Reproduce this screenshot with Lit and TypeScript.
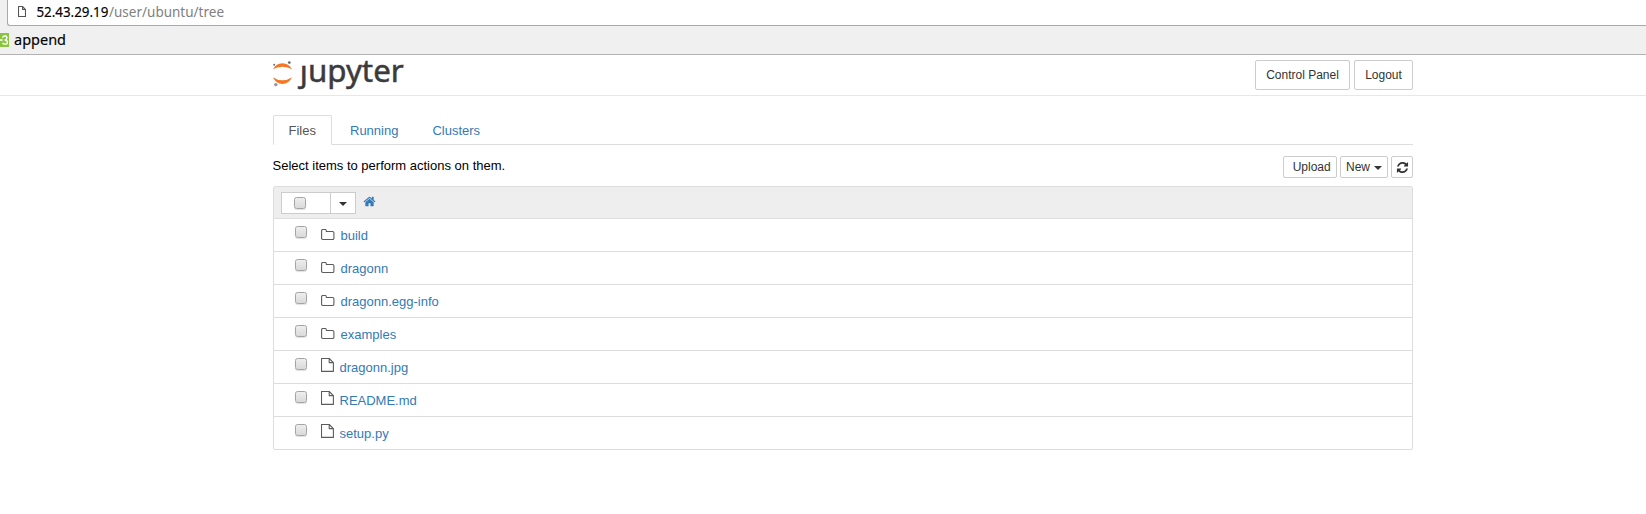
import { LitElement, html, svg, css } from "lit";
import { customElement } from "lit/decorators.js";

interface Entry {
  name: string;
  dir: boolean;
}

const ENTRIES: Entry[] = [
  { name: "build", dir: true },
  { name: "dragonn", dir: true },
  { name: "dragonn.egg-info", dir: true },
  { name: "examples", dir: true },
  { name: "dragonn.jpg", dir: false },
  { name: "README.md", dir: false },
  { name: "setup.py", dir: false },
];

const HOME =
  "M1472 992v480q0 26-19 45t-45 19h-384v-384h-256v384h-384q-26 0-45-19t-19-45v-480q0-1 .5-3t.5-3l575-474 575 474q1 2 1 6zm223-69l-62 74q-8 9-21 11h-3q-13 0-21-7l-692-577-692 577q-12 8-24 7-13-2-21-11l-62-74q-8-10-7-23.5t11-21.5l719-599q32-26 76-26t76 26l244 204v-195q0-14 9-23t23-9h192q14 0 23 9t9 23v408l219 182q10 8 11 21.5t-7 23.5z";
const REFRESH =
  "M1639 1056q0 5-1 7-64 268-268 434.5t-478 166.5q-146 0-282.5-55t-243.5-157l-129 129q-19 19-45 19t-45-19-19-45v-448q0-26 19-45t45-19h448q26 0 45 19t19 45-19 45l-137 137q71 66 161 102t187 36q134 0 250-65t186-179q11-17 53-117 8-23 30-23h192q13 0 22.5 9.5t9.5 22.5zm25-800v448q0 26-19 45t-45 19h-448q-26 0-45-19t-19-45 19-45l138-138q-148-137-349-137-134 0-250 65t-186 179q-11 17-53 117-8 23-30 23h-199q-13 0-22.5-9.5t-9.5-22.5v-7q65-268 270-434.5t480-166.5q146 0 284 55.5t245 156.5l130-129q19-19 45-19t45 19 19 45z";

const folder = svg`<path d="M.6 1.8Q.6.5 1.9.5H4.2Q5.4.5 5.4 2.5H11.6Q12.9 2.5 12.9 3.8V9.2Q12.9 10.5 11.6 10.5H1.9Q.6 10.5.6 9.2Z" fill="none" stroke="#5c5c5c" stroke-width="1.1"/>`;
const file = svg`<path d="M.5.5H8.2L12.4 4.6V13.4H.5ZM8.2.5V4.6H12.4" fill="none" stroke="#5c5c5c" stroke-width="1.1" stroke-linejoin="round"/>`;

@customElement("browser-chrome")
export class BrowserChrome extends LitElement {
  static styles = css`
    :host { display: block; }
    .chrome { box-sizing: border-box; background: #f0f0f0; border-bottom: 1px solid #b3b3b3; height: 55px; overflow: hidden; }
    .address { height: 25px; margin-left: 7px; background: #fff; border-left: 1px solid #a9a9a9; border-bottom: 1px solid #a9a9a9; border-bottom-left-radius: 3px; display: flex; }
    .page { margin: 6px 0 0 10px; width: 8px; height: 11px; }
    .url { margin-left: 9px; }
    .bookmarks { display: flex; }
    svg { display: block; flex: none; }
    text { font-family: "Noto Sans", sans-serif; font-size: 14.5px; }
    .host { stroke: #000; stroke-width: .15px; }
    .path { fill: #808080; }
    .favicon { margin-top: 7px; }
    .label { margin-left: 4px; }
  `;
  render() {
    return html`<div class="chrome">
      <div class="address">
        <svg class="page" viewBox="0 0 8 11"><path d="M.5.5H4.6L7.5 3.5V10.5H.5ZM4.6.5V3.5H7.5" fill="none" stroke="#555" stroke-width="1.1"/></svg>
        <svg class="url" width="200" height="25">
          <text class="host" x="1.4" y="17" textLength="72" lengthAdjust="spacingAndGlyphs">52.43.29.19</text>
          <text class="path" x="74" y="17" textLength="115" lengthAdjust="spacingAndGlyphs">/user/ubuntu/tree</text>
        </svg>
      </div>
      <div class="bookmarks">
        <svg class="favicon" width="9" height="14" viewBox="0 0 9 14">
          <rect width="9" height="14" fill="#8bc53f"/>
          <path d="M0 7H2.6M2.4 4.6Q3.4 2.9 5.2 3T6.9 5Q6.9 6.8 4.6 7Q7.4 7.2 7.4 9.2T5.2 11.2T2.6 9.8" fill="none" stroke="#fff" stroke-width="1.3"/>
        </svg>
        <svg class="label" width="70" height="28">
          <text class="host" x="1" y="18.5" textLength="52" lengthAdjust="spacingAndGlyphs">append</text>
        </svg>
      </div>
    </div>`;
  }
}

@customElement("app-root")
export class AppRoot extends LitElement {
  static styles = css`
    :host { display: block; height: 514px; background: #fff; color: #000; font: 13px/18px "Liberation Sans", Arial, sans-serif; overflow: hidden; }
    * { box-sizing: border-box; }
    svg { display: block; flex: none; }
    .header { height: 41px; border-bottom: 1px solid #e7e7e7; }
    .wrap { width: 1140px; margin-left: 273px; }
    .head { display: flex; justify-content: space-between; }
    .logo { overflow: visible; }
    .word { font-family: "Noto Sans", "Open Sans", sans-serif; font-size: 30px; fill: #3b3b3c; stroke: #3b3b3c; stroke-width: .5px; }
    .btns { display: flex; gap: 4px; padding-top: 5px; }
    .btn { display: flex; align-items: center; justify-content: center; height: 30px; border: 1px solid #ccc; border-radius: 2px; background: #fff; color: #333; font-size: 12px; white-space: nowrap; }
    .panel { width: 95px; }
    .logout { width: 59px; }
    .tabs { display: flex; margin-top: 19px; height: 30px; border-bottom: 1px solid #ddd; color: #337ab7; }
    .tab { padding: 7px 16px 0; }
    .active { width: 59px; height: 30px; padding: 6px 0 0 14.5px; border: 1px solid #ddd; border-bottom-color: #fff; border-radius: 2px 2px 0 0; color: #555; background: #fff; margin-right: 2px; }
    .clusters { margin-left: 2px; }
    .tools { display: flex; justify-content: space-between; height: 41px; }
    .hint { padding-top: 12px; margin-left: -.5px; }
    .actions { display: flex; gap: 3px; padding-top: 11px; }
    .small { height: 22px; }
    .upload { width: 54px; padding-left: 3.4px; }
    .new { width: 48px; gap: 4px; }
    .reload { width: 22px; }
    .caret { width: 0; border: 4px solid transparent; border-top-color: #333; border-bottom: 0; margin-top: 2px; }
    .list { border: 1px solid #ddd; border-radius: 2px; }
    .bar { display: flex; height: 31px; background: #eee; padding: 5px 0 0 7px; }
    .select { display: flex; width: 75px; height: 22px; border: 1px solid #ccc; background: #fff; }
    .all { width: 49px; border-right: 1px solid #ccc; padding: 4px 0 0 12px; }
    .drop { flex: 1; display: flex; align-items: center; justify-content: center; }
    .box { width: 12px; height: 12px; border: 1px solid #a4a4a4; border-radius: 2.5px; background: linear-gradient(#eee, #d9d9d9); box-shadow: 0 1px 1px #e2e2e2; flex: none; }
    .home { margin: 3px 0 0 7.4px; fill: #337ab7; }
    .row { display: flex; height: 33px; border-top: 1px solid #ddd; padding-left: 21px; }
    .row .box { margin-top: 7px; }
    .icon { width: 14px; height: 14px; margin: 7px 0 0 14px; }
    .folder { margin-top: 10px; }
    .name { color: #337ab7; padding: 8px 0 0 5.5px; }
    .file-name { padding-left: 4.5px; }
  `;
  render() {
    return html`
      <browser-chrome></browser-chrome>
      <div class="header">
        <div class="wrap head">
          <svg class="logo" width="135" height="40" viewBox="273 55 135 40">
            <clipPath id="stem"><path d="M290 65.8H307V50H410V95H290Z"/></clipPath>
            <path d="M273 69.2Q276 63.2 282.4 63.2T292 69.2Q288 66.7 282.4 66.7T273 69.2Z" fill="#f37726"/>
            <path d="M273 77.3Q277 80.3 282.4 80.3T292 77.3Q289 83.9 282.4 83.9T273 77.3Z" fill="#f37726"/>
            <circle cx="274.2" cy="64.7" r="1" fill="#6c6d70"/>
            <circle cx="289.3" cy="62.6" r="1.4" fill="#6c6d70"/>
            <circle cx="275.8" cy="84.6" r="1.7" fill="#939598"/>
            <g clip-path="url(#stem)"><text class="word" x="299.8" y="82.4" textLength="104" lengthAdjust="spacingAndGlyphs">jupyter</text></g>
          </svg>
          <div class="btns">
            <div class="btn panel">Control Panel</div>
            <div class="btn logout">Logout</div>
          </div>
        </div>
      </div>
      <div class="wrap">
        <div class="tabs">
          <div class="tab active">Files</div>
          <div class="tab">Running</div>
          <div class="tab clusters">Clusters</div>
        </div>
        <div class="tools">
          <div class="hint">Select items to perform actions on them.</div>
          <div class="actions">
            <div class="btn small upload">Upload</div>
            <div class="btn small new">New<span class="caret"></span></div>
            <div class="btn small reload"><svg width="13" height="13" viewBox="0 0 1792 1792"><path d=${REFRESH} fill="#333"/></svg></div>
          </div>
        </div>
        <div class="list">
          <div class="bar">
            <div class="select">
              <div class="all"><div class="box"></div></div>
              <div class="drop"><span class="caret"></span></div>
            </div>
            <svg class="home" width="13" height="13" viewBox="0 0 1792 1792"><path d=${HOME}/></svg>
          </div>
          ${ENTRIES.map(
            (e) => html`<div class="row">
              <div class="box"></div>
              <svg class="icon ${e.dir ? "folder" : ""}" viewBox="0 0 14 14">${e.dir ? folder : file}</svg>
              <div class="name ${e.dir ? "" : "file-name"}">${e.name}</div>
            </div>`
          )}
        </div>
      </div>`;
  }
}
